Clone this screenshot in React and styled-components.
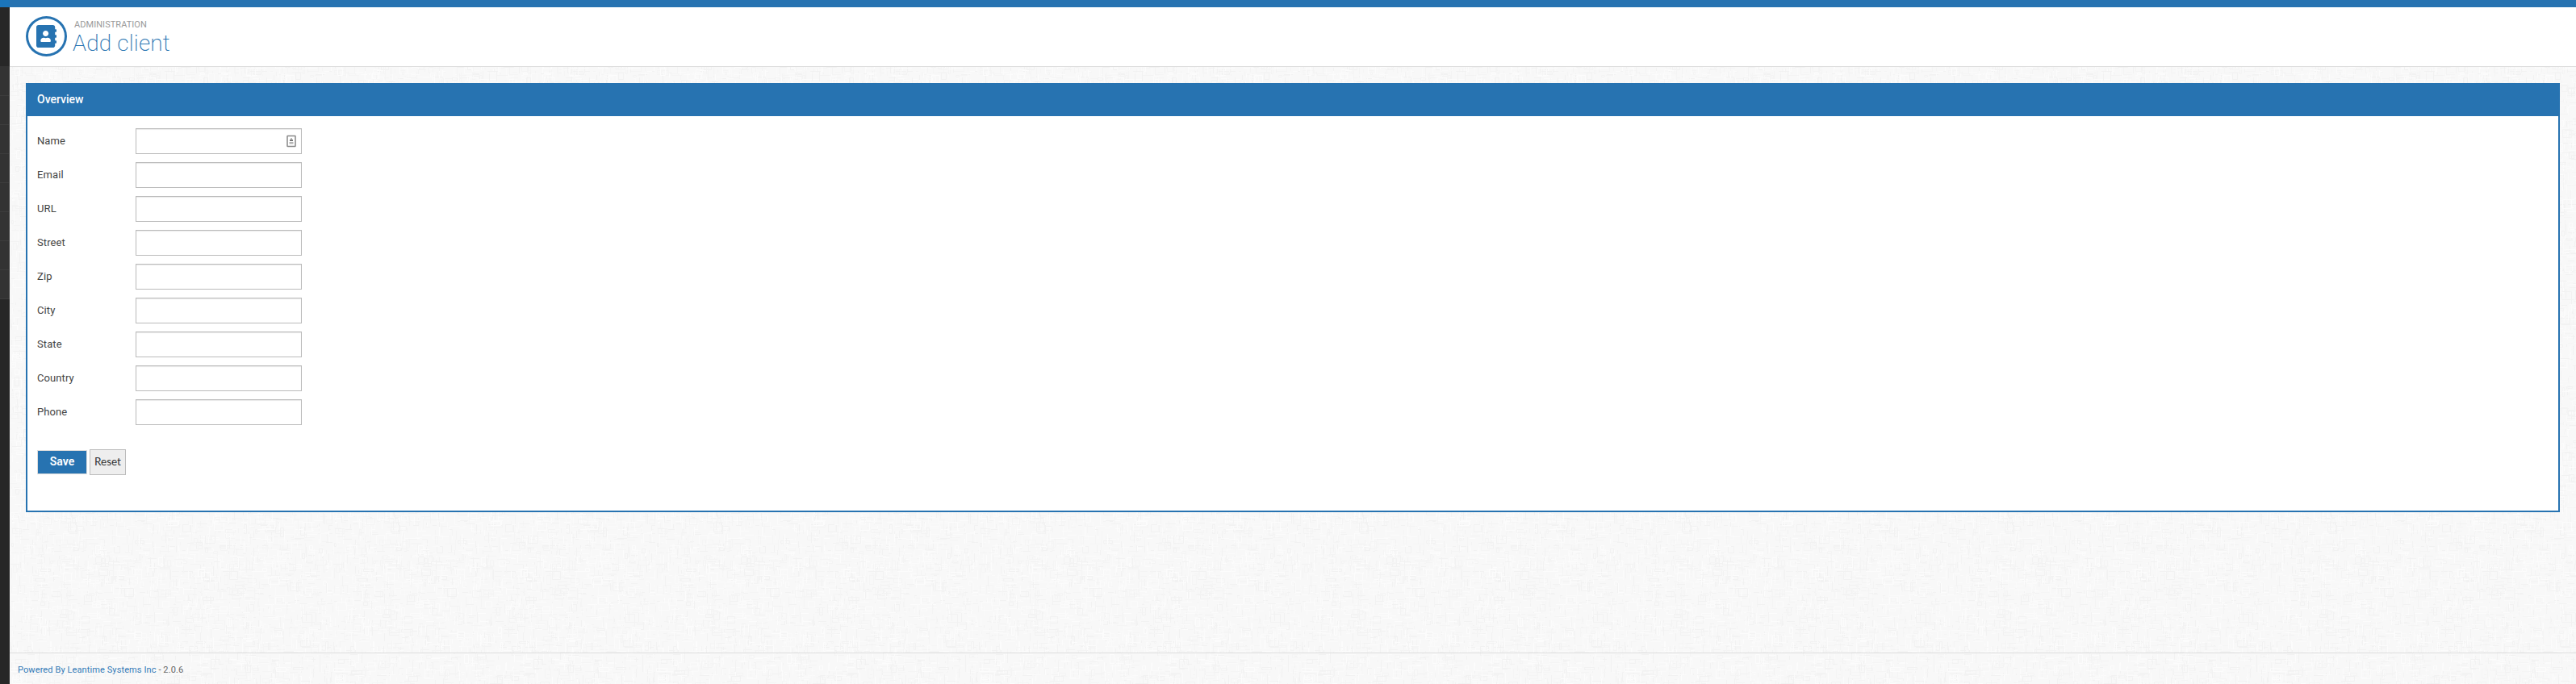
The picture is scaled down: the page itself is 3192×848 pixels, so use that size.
import React from "react";
import styled, { createGlobalStyle } from "styled-components";

const BLUE = "#2773b1";
const TILE = 400;

// Woven paper texture: a repeating tile of faint fibres and outlined squares.
function makeTexture() {
  let s = 71;
  const rnd = () => ((s = (s * 16807) % 2147483647) / 2147483647);
  const shades = ["#f2f2f2", "#f5f5f5", "#fbfbfb", "#fcfcfc", "#f4f4f4", "#fafafa"];
  let out = "";
  for (let i = 0; i < 6000; i++) {
    const x = Math.floor(rnd() * TILE);
    const y = Math.floor(rnd() * TILE);
    const l = 2 + Math.floor(rnd() * 12);
    const h = 2 + Math.floor(rnd() * 10);
    const c = shades[Math.floor(rnd() * shades.length)];
    const k = rnd();
    if (k < 0.14) out += `<path d='M${x}.5 ${y}.5h${l}v${h}h-${l}z' fill='none' stroke='${c}'/>`;
    else if (k < 0.58) out += `<path d='M${x} ${y}h${l}v1h-${l}z' fill='${c}'/>`;
    else out += `<path d='M${x} ${y}h1v${l}h-1z' fill='${c}'/>`;
  }
  const svg = `<svg xmlns='http://www.w3.org/2000/svg' width='${TILE}' height='${TILE}'><rect width='${TILE}' height='${TILE}' fill='#f8f8f8'/>${out}</svg>`;
  return `url("data:image/svg+xml,${encodeURIComponent(svg)}")`;
}
const TEXTURE = makeTexture();

const Global = createGlobalStyle`
  * { box-sizing: border-box; }
  body { margin: 0; font: 13px/20px Roboto, "Liberation Sans", sans-serif; color: #444; overflow: hidden; }
`;
const Page = styled.div`
  height: 848px;
  display: flex;
  flex-direction: column;
`;
const TopBar = styled.div`
  height: 9px;
  flex: none;
  background: linear-gradient(90deg, #1b75bb 12px, ${BLUE} 12px);
`;
const Body = styled.div`
  flex: 1;
  display: flex;
  min-height: 0;
`;
const Sidebar = styled.nav`
  width: 12px;
  flex: none;
  padding-top: 73px;
  background: #272727;
`;
const MenuItem = styled.div`
  height: ${(p) => (p.$first ? 37 : 36)}px;
  background: #333;
  border-bottom: 1px solid #3d3d3d;
  border-right: 1px solid #3a3a3a;
`;
const Main = styled.main`
  flex: 1;
  display: flex;
  flex-direction: column;
  background: #f8f8f8 ${TEXTURE};
`;
const PageHeader = styled.header`
  height: 74px;
  flex: none;
  display: flex;
  padding: 11px 0 0 20px;
  background: #fff;
  border-bottom: 1px solid #ddd;
`;
const IconRing = styled.div`
  width: 51px;
  height: 50px;
  border: 3px solid ${BLUE};
  border-radius: 50%;
  display: flex;
  align-items: center;
  justify-content: center;
  svg { display: block; }
`;
const Heading = styled.div`
  padding: 3px 0 0 7px;
`;
const Section = styled.div`
  margin-left: 2px;
  font-size: 11px;
  line-height: 16px;
  letter-spacing: 0.05px;
  color: #999;
`;
const Title = styled.h1`
  margin: 1px 0 0;
  font-size: 28px;
  font-weight: 200;
  line-height: 28px;
  letter-spacing: 0.15px;
  color: ${BLUE};
`;
const Panel = styled.section`
  height: 532px;
  margin: 20px 20px 0;
  background: #fff;
  border: 2px solid ${BLUE};
`;
const PanelTitle = styled.h4`
  height: 39px;
  margin: 0;
  padding: 8px 12px;
  background: ${BLUE};
  color: #fff;
  font-size: 14px;
  font-weight: 500;
  line-height: 20px;
`;
const Form = styled.form`
  padding: 15px 12px 0;
`;
const Row = styled.div`
  display: flex;
  height: 32px;
  margin-bottom: 10px;
`;
const Label = styled.label`
  width: 122px;
  padding-top: 6px;
  letter-spacing: 0.1px;
`;
const Field = styled.div`
  width: 206px;
  height: 32px;
  display: flex;
  align-items: center;
  justify-content: flex-end;
  padding-right: 6px;
  background: #fff;
  border: 1px solid #bbb;
  box-shadow: inset 0 1px 1px #e8e8e8;
`;
const Actions = styled.div`
  display: flex;
  align-items: center;
  gap: 3px;
  margin-top: 30px;
`;
const Button = styled.button`
  width: ${(p) => (p.$primary ? 62 : 45)}px;
  height: ${(p) => (p.$primary ? 30 : 32)}px;
  padding: 0 0 2px;
  font: ${(p) => (p.$primary ? "600 14px/20px Roboto" : "400 13.5px/20px Lato")}, sans-serif;
  color: ${(p) => (p.$primary ? "#fff" : "#333")};
  background: ${(p) => (p.$primary ? BLUE : "#eee")};
  border: 1px solid ${(p) => (p.$primary ? "#ddd" : "#bbb")};
`;
const Footer = styled.footer`
  height: 39px;
  margin-top: auto;
  padding: 11px 10px 0;
  border-top: 1px solid #ddd;
  font-size: 11px;
  letter-spacing: 0.1px;
  color: #666;
  a { color: #337ab7; text-decoration: none; }
`;

const AddressBook = () => (
  <svg width="25" height="28" viewBox="0 0 448 512" preserveAspectRatio="none" fill={BLUE}>
    <path d="M436 160c6.600 0 12-5.400 12-12v-40c0-6.600-5.400-12-12-12h-20V48c0-26.500-21.500-48-48-48H48C21.500 0 0 21.500 0 48v416c0 26.500 21.500 48 48 48h320c26.500 0 48-21.500 48-48v-48h20c6.600 0 12-5.400 12-12v-40c0-6.600-5.400-12-12-12h-20v-64h20c6.600 0 12-5.400 12-12v-40c0-6.600-5.400-12-12-12h-20v-64h20zm-228-32c35.300 0 64 28.700 64 64s-28.700 64-64 64-64-28.700-64-64 28.700-64 64-64zm112 236.800c0 10.600-10 19.200-22.400 19.200H118.400C106 384 96 375.400 96 364.800v-19.200c0-31.800 30.100-57.600 67.200-57.600h5c12.300 5.100 25.700 8 39.800 8s27.600-2.900 39.800-8h5c37.100 0 67.200 25.800 67.200 57.600v19.200z" />
  </svg>
);
const AutofillIcon = () => (
  <svg width="12" height="16" viewBox="0 0 12 16">
    <rect x="1" y="1.500" width="10" height="13" rx="0.500" fill="#fff" stroke="#888" strokeWidth="1.500" />
    <path d="M5.500 4h1v2h1.500v2H4V6h1.500z" fill="#777" />
    <path d="M3.500 9h5v2.500h-5z" fill="#b5b5b5" />
  </svg>
);

const fields = ["Name", "Email", "URL", "Street", "Zip", "City", "State", "Country", "Phone"];

export default function App() {
  return (
    <Page>
      <Global />
      <TopBar />
      <Body>
        <Sidebar>
          {Array.from({ length: 8 }, (_, i) => <MenuItem key={i} $first={i === 0} />)}
        </Sidebar>
        <Main>
          <PageHeader>
            <IconRing><AddressBook /></IconRing>
            <Heading>
              <Section>ADMINISTRATION</Section>
              <Title>Add client</Title>
            </Heading>
          </PageHeader>
          <Panel>
            <PanelTitle>Overview</PanelTitle>
            <Form>
              {fields.map((name) => (
                <Row key={name}>
                  <Label>{name}</Label>
                  <Field>{name === "Name" && <AutofillIcon />}</Field>
                </Row>
              ))}
              <Actions>
                <Button type="button" $primary>Save</Button>
                <Button type="button">Reset</Button>
              </Actions>
            </Form>
          </Panel>
          <Footer><a>Powered By Leantime Systems Inc</a> - 2.0.6</Footer>
        </Main>
      </Body>
    </Page>
  );
}
